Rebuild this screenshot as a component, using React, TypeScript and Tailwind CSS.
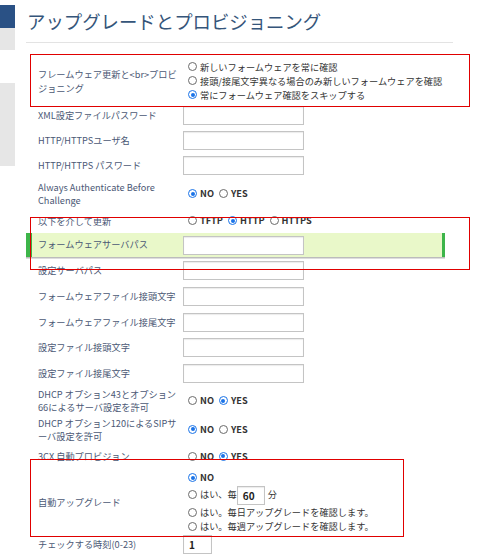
import React from "react";

const font = { fontFamily: '"Noto Sans CJK JP", "Noto Sans", sans-serif' };

function Radio({ checked, children }: { checked?: boolean; children: React.ReactNode }) {
  return (
    <span className="inline-flex items-center">
      <span
        className={
          checked
            ? "ml-[5px] mr-[3px] w-[9px] h-[9px] rounded-full border-[1.5px] border-[#1a73e8] bg-white flex items-center justify-center"
            : "ml-[5px] mr-[3px] w-[9px] h-[9px] rounded-full border border-[#6b6b6b] bg-white"
        }
      >
        {checked && <span className="w-[4px] h-[4px] rounded-full bg-[#1a73e8]" />}
      </span>
      {children}
    </span>
  );
}

function Input({ w = "w-[121px]", value }: { w?: string; value?: string }) {
  return (
    <div
      className={`${w} h-[19px] border border-[#c4c4c4] bg-white shadow-[inset_0_1px_1px_rgba(0,0,0,0.08)] pl-[5px] text-[10px] font-bold text-[#222] leading-[17px]`}
    >
      {value}
    </div>
  );
}

function Row({ label, className, children }: { label: React.ReactNode; className: string; children?: React.ReactNode }) {
  return (
    <div className={`flex items-center pl-[12px] ${className}`}>
      <div className="w-[145px] shrink-0 leading-[13px] text-[#4b5875]">{label}</div>
      <div className="text-[#333]">{children}</div>
    </div>
  );
}

export default function App() {
  return (
    <div className="relative w-[493px] h-[555px] overflow-hidden bg-white text-[9.2px]" style={font}>
      <div className="flex">
        {/* sidebar */}
        <div className="w-[15px] shrink-0">
          <div className="mt-[5px] h-[23px] bg-[#2a5185]" />
          <div className="h-[22px] bg-[#e6e6e6]" />
          <div className="mt-[33px] h-[83px] bg-[#e6e6e6]" />
        </div>

        {/* main */}
        <div className="ml-[11px] w-[427px]">
          <div className="h-[43px] flex items-center pl-[1px] border-b border-[#e3e3e3]">
            <h1 className="text-[18.4px] text-[#35557a] leading-none">アップグレードとプロビジョニング</h1>
          </div>

          <Row className="mt-[14px] h-[47px]" label={<div className="leading-[14px]">フレームウェア更新と&lt;br&gt;プロビ<br />ジョニング</div>}>
            <div className="flex flex-col leading-[14px]">
              <Radio>新しいフォームウェアを常に確認</Radio>
              <Radio>接頭/接尾文字異なる場合のみ新しいフォームウェアを確認</Radio>
              <Radio checked>常にフォームウェア確認をスキップする</Radio>
            </div>
          </Row>
          <Row className="h-[23px]" label="XML設定ファイルパスワード"><Input /></Row>
          <Row className="h-[26px]" label="HTTP/HTTPSユーザ名"><Input /></Row>
          <Row className="h-[25px]" label="HTTP/HTTPS パスワード"><Input /></Row>
          <Row className="h-[32px]" label={<>Always Authenticate Before<br />Challenge</>}>
            <div className="flex font-semibold">
              <Radio checked>NO</Radio>
              <Radio>YES</Radio>
            </div>
          </Row>
          <Row className="h-[22px]" label="以下を介して更新">
            <div className="flex font-semibold">
              <Radio>TFTP</Radio>
              <Radio checked>HTTP</Radio>
              <Radio>HTTPS</Radio>
            </div>
          </Row>
          <div className="mt-[1px] w-[419px] h-[24px] flex items-center bg-[#e9f8c9] border-l-[6px] border-r-[3px] border-[#3db54a] shadow-[0_1.5px_0_#bcbcbc] pl-[6px]">
            <div className="w-[145px] shrink-0 text-[#4b5875]">フォームウェアサーバパス</div>
            <Input />
          </div>
          <Row className="h-[27px]" label="設定サーバパス"><Input /></Row>
          <Row className="h-[25px]" label="フォームウェアファイル接頭文字"><Input /></Row>
          <Row className="h-[26px]" label="フォームウェアファイル接尾文字"><Input /></Row>
          <Row className="h-[25px]" label="設定ファイル接頭文字"><Input /></Row>
          <Row className="h-[26px]" label="設定ファイル接尾文字"><Input /></Row>
          <Row className="h-[30px]" label={<>DHCP オプション43とオプション<br />66によるサーバ設定を許可</>}>
            <div className="flex font-semibold">
              <Radio>NO</Radio>
              <Radio checked>YES</Radio>
            </div>
          </Row>
          <Row className="h-[27px]" label={<>DHCP オプション120によるSIPサ<br />ーバ設定を許可</>}>
            <div className="flex font-semibold">
              <Radio checked>NO</Radio>
              <Radio>YES</Radio>
            </div>
          </Row>
          <Row className="h-[27px]" label="3CX 自動プロビジョン">
            <div className="flex font-semibold">
              <Radio>NO</Radio>
              <Radio checked>YES</Radio>
            </div>
          </Row>
          <Row className="h-[64px]" label="自動アップグレード">
            <div className="flex flex-col pt-[1px]">
              <div className="h-[14px] flex items-center font-semibold"><Radio checked>NO</Radio></div>
              <div className="h-[20px] flex items-center">
                <Radio>はい、毎</Radio>
                <Input w="w-[28px]" value="60" />
                <span className="ml-[3px]">分</span>
              </div>
              <div className="mt-[1px] h-[14px] flex items-center"><Radio>はい。毎日アップグレードを確認します。</Radio></div>
              <div className="h-[14px] flex items-center"><Radio>はい。毎週アップグレードを確認します。</Radio></div>
            </div>
          </Row>
          <Row className="h-[21px]" label="チェックする時刻(0-23)">
            <Input w="w-[29px]" value="1" />
          </Row>
        </div>
      </div>

      {/* red annotation frames */}
      <div className="pointer-events-none absolute left-[30px] top-[54px] w-[440px] h-[53px] border border-[#e00000]" />
      <div className="pointer-events-none absolute left-[30px] top-[217px] w-[440px] h-[53px] border border-[#e00000]" />
      <div className="pointer-events-none absolute left-[30px] top-[459px] w-[374px] h-[78px] border border-[#e00000]" />
    </div>
  );
}
